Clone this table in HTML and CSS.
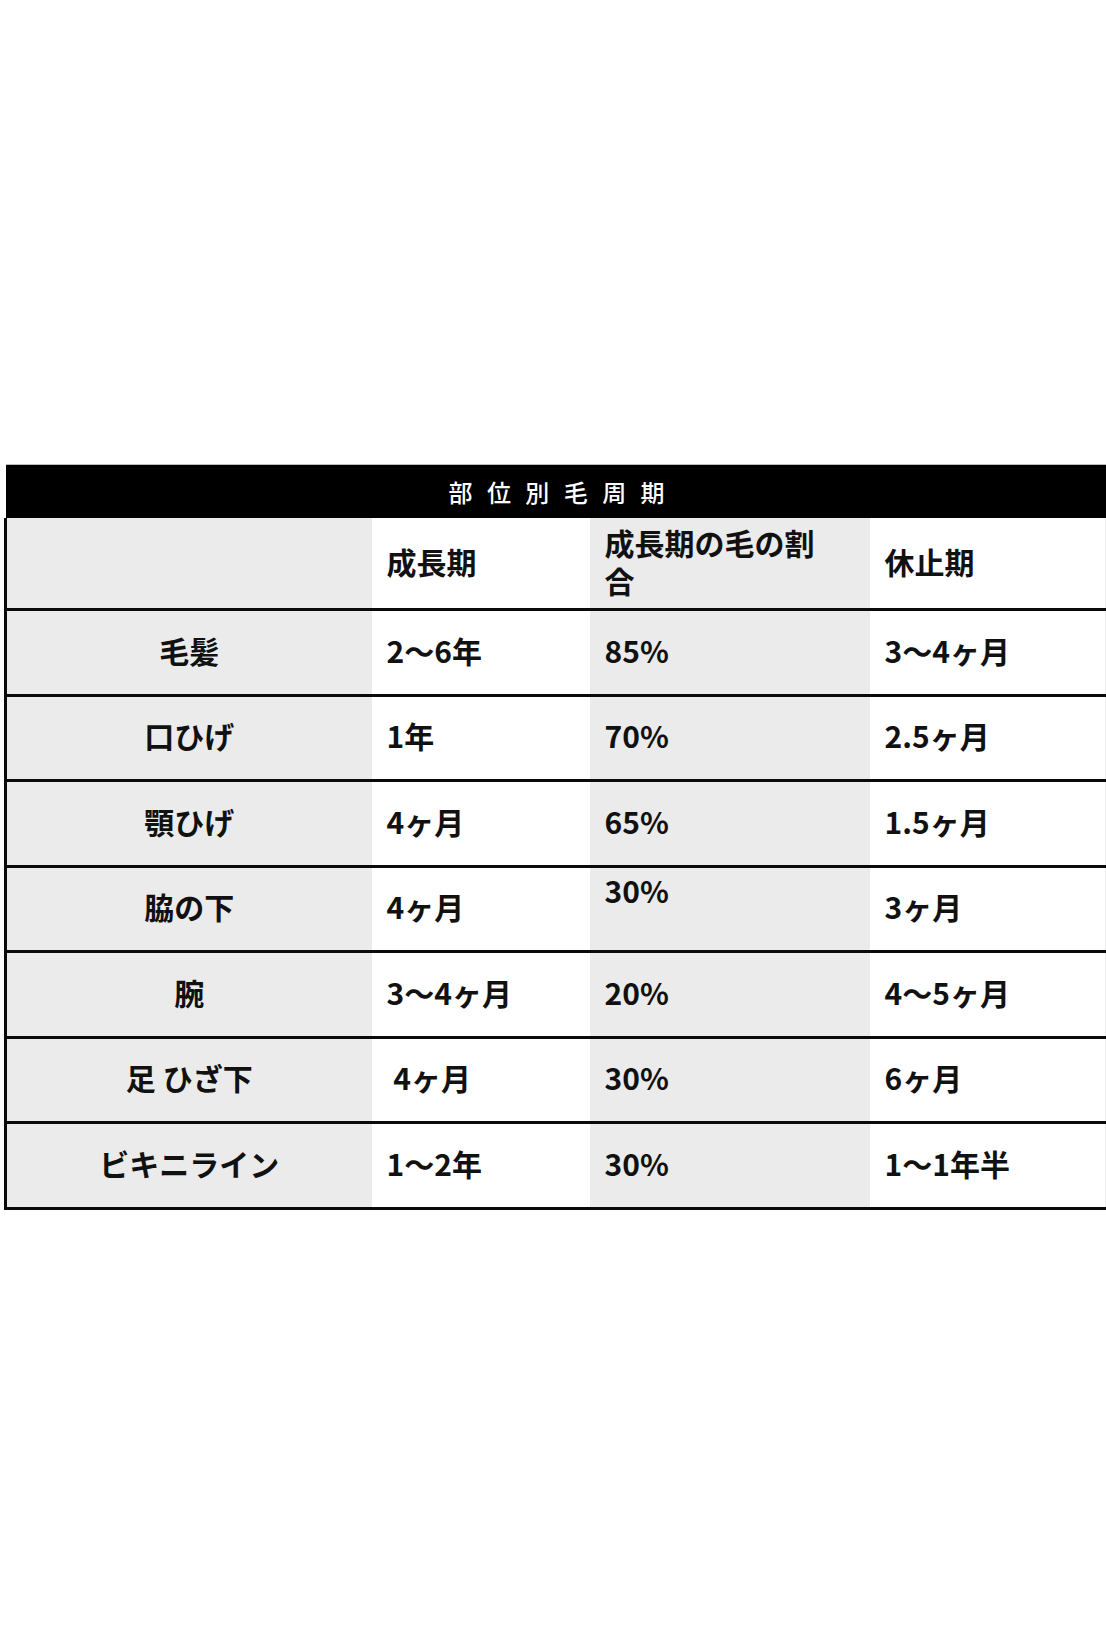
FILE: index.html
```html
<!DOCTYPE html>
<html lang="ja">
<head>
<meta charset="utf-8">
<title>部位別毛周期</title>
<link rel="stylesheet" href="styles.css">
</head>
<body>
<div class="page">
  <table class="cycle">
    <colgroup>
      <col class="c-part">
      <col class="c-grow">
      <col class="c-ratio">
      <col class="c-rest">
      <col class="c-edge">
    </colgroup>
    <thead>
      <tr class="title-row">
        <th colspan="5" class="title"><span>部 位 別 毛 周 期</span></th>
      </tr>
      <tr class="head-row">
        <th class="part"></th>
        <th class="grow">成長期</th>
        <th class="ratio wrap">成長期の毛の割合</th>
        <th class="rest">休止期</th>
        <th class="edge"></th>
      </tr>
    </thead>
    <tbody>
      <tr><td class="part">毛髪</td><td class="grow">2〜6年</td><td class="ratio">85%</td><td class="rest">3〜4ヶ月</td><td class="edge"></td></tr>
      <tr><td class="part">口ひげ</td><td class="grow">1年</td><td class="ratio">70%</td><td class="rest">2.5ヶ月</td><td class="edge"></td></tr>
      <tr><td class="part">顎ひげ</td><td class="grow">4ヶ月</td><td class="ratio">65%</td><td class="rest">1.5ヶ月</td><td class="edge"></td></tr>
      <tr><td class="part">脇の下</td><td class="grow">4ヶ月</td><td class="ratio top">30%</td><td class="rest">3ヶ月</td><td class="edge"></td></tr>
      <tr><td class="part">腕</td><td class="grow">3〜4ヶ月</td><td class="ratio">20%</td><td class="rest">4〜5ヶ月</td><td class="edge"></td></tr>
      <tr><td class="part">足 ひざ下</td><td class="grow">&nbsp;4ヶ月</td><td class="ratio">30%</td><td class="rest">6ヶ月</td><td class="edge"></td></tr>
      <tr><td class="part">ビキニライン</td><td class="grow">1〜2年</td><td class="ratio">30%</td><td class="rest">1〜1年半</td><td class="edge"></td></tr>
    </tbody>
  </table>
</div>
</body>
</html>
```

FILE: styles.css
```css
html, body {
  margin: 0;
  padding: 0;
  background: #ffffff;
}

.page {
  padding-top: 464px;
  padding-left: 4px;
}

.cycle {
  border-collapse: collapse;
  table-layout: fixed;
  width: 1102px;
  font-family: "Noto Sans CJK JP", "Noto Sans", sans-serif;
  color: #111111;
}

.c-part { width: 366px; }
.c-grow { width: 218px; }
.c-ratio { width: 280px; }
.c-rest { width: 235px; }
.c-edge { width: 3px; }

.cycle th,
.cycle td {
  padding: 0 0 5px 0;
  font-size: 30px;
  font-weight: 700;
  line-height: 38px;
  text-align: left;
  vertical-align: middle;
}

.title-row th {
  background: #000000;
  height: 53px;
  padding: 0;
  border-top: 1px solid #bdbdbd;
  color: #ffffff;
  text-align: center;
  font-size: 24px;
  font-weight: 500;
  line-height: 30px;
}

.title span {
  letter-spacing: 4.5px;
  margin-right: -4.5px;
}

.head-row th,
.cycle tbody tr td {
  border-bottom: 3px solid #0a0a0a;
}

.head-row th {
  height: 85px;
}

.cycle tbody td {
  height: 77.5px;
}

.cycle .part {
  background: #ebebeb;
  border-left: 3px solid #0a0a0a;
  text-align: center;
}

.cycle .grow,
.cycle .rest {
  background: #ffffff;
  padding-left: 15px;
}

.cycle .ratio {
  background: #ebebeb;
  padding-left: 15px;
  padding-right: 15px;
}

.cycle .ratio.wrap {
  padding-right: 45px;
}

.cycle .ratio.top {
  vertical-align: top;
  padding-top: 3px;
  padding-bottom: 0;
}

.cycle .edge {
  background: #ebebeb;
}
```
